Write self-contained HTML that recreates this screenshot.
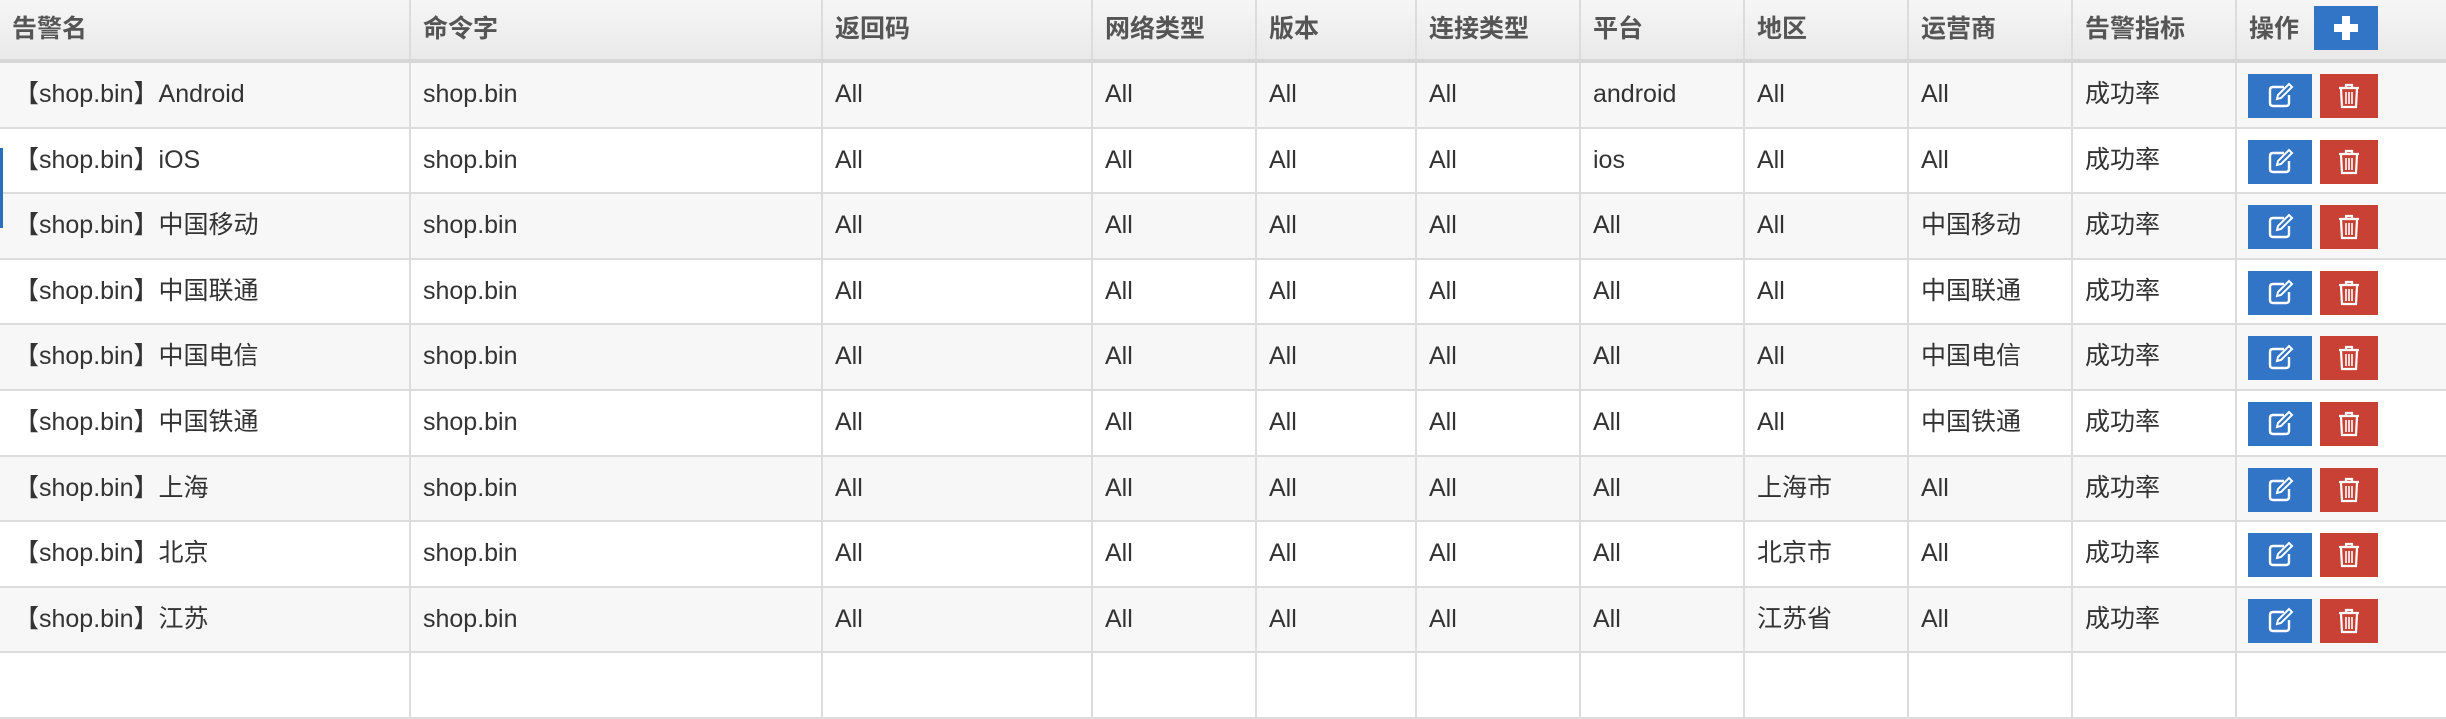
<!DOCTYPE html>
<html><head><meta charset="utf-8"><style>
*{margin:0;padding:0;box-sizing:border-box}
body{width:2446px;height:664px;overflow:hidden;background:#fff;font-family:"Liberation Sans","Noto Sans CJK SC",sans-serif;color:#333}
.row{position:absolute;left:0;width:2446px;display:flex;border-bottom:2px solid #dcdcdc}
.c{border-right:2px solid #dcdcdc;height:100%;padding-left:12px;font-size:25px;white-space:nowrap;overflow:hidden;line-height:30px;padding-top:16px}
.h{top:0;height:63px;background:linear-gradient(#f6f6f6,#e9e9e9);border-bottom:4px solid #d6d6d6}
.h .c{font-weight:bold;color:#555;font-size:25px;padding-left:12px;padding-top:14px}
.btn{position:absolute;width:64px;height:44px;display:flex;align-items:center;justify-content:center}
.b{background:#3274c6}.r{background:#c94135}
</style></head><body>
<div class="row h">
<div class="c" style="width:411px">告警名</div><div class="c" style="width:412px">命令字</div><div class="c" style="width:270px">返回码</div><div class="c" style="width:164px">网络类型</div><div class="c" style="width:160px">版本</div><div class="c" style="width:164px">连接类型</div><div class="c" style="width:164px">平台</div><div class="c" style="width:164px">地区</div><div class="c" style="width:164px">运营商</div><div class="c" style="width:164px">告警指标</div><div class="c" style="width:209px;border-right:none">操作</div>
</div>
<div class="btn b" style="left:2314px;top:6px"><svg width="30" height="30"><rect x="11" y="3" width="8" height="24" fill="#fff"/><rect x="3" y="11" width="24" height="8" fill="#fff"/></svg></div>
<div id="rows"></div>
<script>
var d=[["Android","All","android","All","All"],["iOS","All","ios","All","All"],["中国移动","All","All","All","中国移动"],["中国联通","All","All","All","中国联通"],["中国电信","All","All","All","中国电信"],["中国铁通","All","All","All","中国铁通"],["上海","All","All","上海市","All"],["北京","All","All","北京市","All"],["江苏","All","All","江苏省","All"],["","","","",""]];
var h='';var w=[411,412,270,164,160,164,164,164,164,164,209];
d.forEach(function(r,i){var top=63+i*65.6;var bg=i%2==0?'#f7f7f7':'#fff';
var v=i<9?['【shop.bin】'+r[0],'shop.bin','All','All','All','All',r[2],r[3],r[4],'成功率','']:['','','','','','','','','','',''];
h+='<div class="row" style="top:'+top+'px;height:65.6px;background:'+bg+'">';
v.forEach(function(t,j){h+='<div class="c" style="width:'+w[j]+'px;'+(j==0?'padding-left:14px;':'')+(j==10?'border-right:none':'')+'">'+t+'</div>'});
h+='</div>';
if(i<9){var bt=top+11;
h+='<div class="btn b" style="left:2248px;top:'+bt+'px"><svg width="28" height="28" viewBox="0 0 28 28" fill="none" stroke="#fff" stroke-width="2.4"><path d="M18 5H7Q4 5 4 8V21Q4 24 7 24H20Q23 24 23 21V13"/><path d="M11 17l1-4 11-11 3 3-11 11z" stroke-width="2"/></svg></div>';
h+='<div class="btn r" style="left:2320px;top:'+bt+'px;width:58px"><svg width="24" height="28" viewBox="0 0 24 28" fill="none" stroke="#fff" stroke-width="2.2"><path d="M2 6H22M9 6V3H15V6"/><path d="M4 7L5 25H19L20 7"/><path d="M9 10V22M12 10V22M15 10V22" stroke-width="1.6"/></svg></div>';}
});
document.getElementById('rows').innerHTML=h;
</script>
<div style="position:absolute;left:0;top:148px;width:3px;height:80px;background:#2a6ec0"></div>
</body></html>
